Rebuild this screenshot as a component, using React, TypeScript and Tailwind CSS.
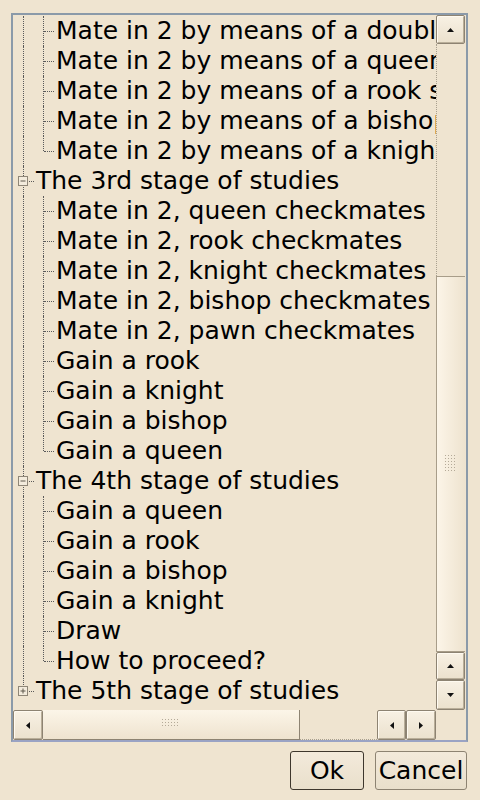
import React from "react";

type Vert = "full" | "top" | "none";

function Cell({ vert, horiz, box }: { vert: Vert; horiz: boolean; box?: "+" | "-" }) {
  return (
    <div className="relative w-[20px] h-[30px] shrink-0">
      {vert === "full" && (
        <div className="absolute left-[10px] top-0 h-[30px] border-l border-dotted border-[#5a5a5a]" />
      )}
      {vert === "top" && (
        <div className="absolute left-[10px] top-0 h-[15px] border-l border-dotted border-[#5a5a5a]" />
      )}
      {horiz && (
        <div className="absolute left-[11px] top-[15px] w-[10px] border-t border-dotted border-[#5a5a5a]" />
      )}
      {box && (
        <svg className="absolute left-[5px] top-[10px]" width="11" height="11" viewBox="0 0 11 11">
          <rect x="0.5" y="0.5" width="9" height="9" fill="#f3ebdc" stroke="#8f8677" />
          <line x1="2.5" y1="5" x2="7.5" y2="5" stroke="#5f584c" />
          {box === "+" && <line x1="5" y1="2.5" x2="5" y2="7.5" stroke="#5f584c" />}
        </svg>
      )}
    </div>
  );
}

type Row = { text: string; level: 0 | 1; last?: boolean; box?: "+" | "-" };

const rows: Row[] = [
  { text: "Mate in 2 by means of a double check", level: 1 },
  { text: "Mate in 2 by means of a queen sacrifice", level: 1 },
  { text: "Mate in 2 by means of a rook sacrifice", level: 1 },
  { text: "Mate in 2 by means of a bishop sacrifice", level: 1 },
  { text: "Mate in 2 by means of a knight sacrifice", level: 1, last: true },
  { text: "The 3rd stage of studies", level: 0, box: "-" },
  { text: "Mate in 2, queen checkmates", level: 1 },
  { text: "Mate in 2, rook checkmates", level: 1 },
  { text: "Mate in 2, knight checkmates", level: 1 },
  { text: "Mate in 2, bishop checkmates", level: 1 },
  { text: "Mate in 2, pawn checkmates", level: 1 },
  { text: "Gain a rook", level: 1 },
  { text: "Gain a knight", level: 1 },
  { text: "Gain a bishop", level: 1 },
  { text: "Gain a queen", level: 1, last: true },
  { text: "The 4th stage of studies", level: 0, box: "-" },
  { text: "Gain a queen", level: 1 },
  { text: "Gain a rook", level: 1 },
  { text: "Gain a bishop", level: 1 },
  { text: "Gain a knight", level: 1 },
  { text: "Draw", level: 1 },
  { text: "How to proceed?", level: 1, last: true },
  { text: "The 5th stage of studies", level: 0, box: "+", last: true },
];

function Arrow({ dir }: { dir: "up" | "down" | "left" | "right" }) {
  const pts: Record<string, string> = {
    up: "0,4 7,4 3.5,0",
    down: "0,0 7,0 3.5,4",
    left: "4,0 4,7 0,3.5",
    right: "0,0 0,7 4,3.5",
  };
  const vertical = dir === "up" || dir === "down";
  return (
    <svg width={vertical ? 7 : 4} height={vertical ? 4 : 7} viewBox={vertical ? "0 0 7 4" : "0 0 4 7"}>
      <polygon points={pts[dir]} fill="#111" />
    </svg>
  );
}

function SButton({ dir, className }: { dir: "up" | "down" | "left" | "right"; className: string }) {
  return (
    <div
      className={
        "flex items-center justify-center shrink-0 rounded-[2px] border border-[#8d8372] bg-gradient-to-b from-[#f8f1e4] to-[#ebe1cd] shadow-[inset_1px_1px_0_#fffaf0,inset_-1px_-1px_0_#b9ae99] " +
        className
      }
    >
      <Arrow dir={dir} />
    </div>
  );
}

function Grip({ cols, rowsN }: { cols: number; rowsN: number }) {
  const dots: React.ReactNode[] = [];
  for (let r = 0; r < rowsN; r++)
    for (let c = 0; c < cols; c++)
      dots.push(<rect key={r + "-" + c} x={c * 3} y={r * 3} width="1" height="1" fill="#b4aa98" />);
  return (
    <svg width={cols * 3} height={rowsN * 3}>
      {dots}
    </svg>
  );
}

export default function App() {
  return (
    <div className="w-[480px] h-[800px] bg-[#efe4d0] pt-[13px] pl-[11px] font-['DejaVu_Sans',sans-serif] text-black">
      <div className="w-[457px] h-[729px] border-2 border-[#8b9aa9] border-b-[#9aa3c4] flex flex-col">
        <div className="flex h-[695px]">
          <div className="w-[423px] h-[695px] overflow-hidden pt-[1px]">
            {rows.map((r, i) => (
              <div key={i} className="flex h-[30px] items-center whitespace-nowrap">
                {r.level === 1 ? (
                  <>
                    <Cell vert="full" horiz={false} />
                    <Cell vert={r.last ? "top" : "full"} horiz />
                    <span className="pl-[3px] text-[25px] leading-[30px]">{r.text}</span>
                  </>
                ) : (
                  <>
                    <Cell vert={r.last ? "top" : "full"} horiz box={r.box} />
                    <span className="pl-[3px] text-[25px] leading-[30px]">{r.text}</span>
                  </>
                )}
              </div>
            ))}
          </div>
          <div className="w-[30px] flex flex-col">
            <SButton dir="up" className="h-[29px] w-[29px]" />
            <div className="flex-1 border-l border-dotted border-[#a9a08f]" />
            <div className="h-[376px] w-[29px] flex items-center justify-center border-y border-l border-[#a89d89] bg-gradient-to-r from-[#fcf5e8] to-[#eee3cf]">
              <Grip cols={4} rowsN={6} />
            </div>
            <SButton dir="up" className="h-[28px] w-[29px]" />
            <SButton dir="down" className="h-[30px] w-[29px]" />
          </div>
        </div>
        <div className="h-[30px] flex">
          <SButton dir="left" className="w-[30px] h-[30px]" />
          <div className="w-[257px] h-[30px] flex items-center justify-center border-r border-b border-[#8d8372] bg-gradient-to-b from-[#fcf5e8] to-[#eee3cf] pb-[2px]">
            <Grip cols={6} rowsN={3} />
          </div>
          <div className="flex-1 border-b border-dotted border-[#a9a08f]" />
          <SButton dir="left" className="w-[29px] h-[30px]" />
          <SButton dir="right" className="w-[30px] h-[30px]" />
          <div className="w-[30px]" />
        </div>
      </div>
      <div className="flex justify-end gap-[11px] mt-[9px] pr-[13px]">
        <div className="w-[74px] h-[39px] flex items-center justify-center rounded-[3px] border border-[#3e372d] bg-gradient-to-b from-[#f3eadb] to-[#e9dfcb] text-[25px]">
          Ok
        </div>
        <div className="w-[92px] h-[39px] flex items-center justify-center rounded-[3px] border border-[#8d8372] bg-gradient-to-b from-[#f3eadb] to-[#e9dfcb] text-[25px]">
          Cancel
        </div>
      </div>
    </div>
  );
}
